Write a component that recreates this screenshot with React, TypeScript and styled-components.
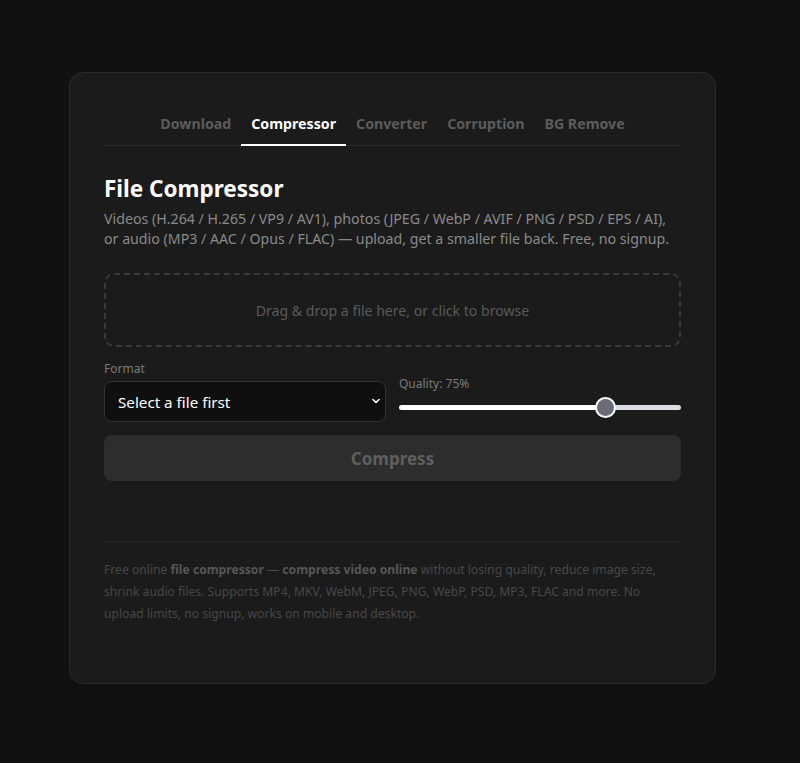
import { useState } from 'react';
import styled, { createGlobalStyle } from 'styled-components';

const GlobalStyle = createGlobalStyle`
  html, body {
    margin: 0;
    padding: 0;
    background: #111111;
    font-family: 'Noto Sans', 'Open Sans', sans-serif;
  }
  * { box-sizing: border-box; }
`;

const TABS = ['Download', 'Compressor', 'Converter', 'Corruption', 'BG Remove'];

const App = () => {
  const [active, setActive] = useState('Compressor');
  const [quality, setQuality] = useState(75);

  return (
    <Page>
      <GlobalStyle />
      <Card>
        <Tabs>
          {TABS.map((t) => (
            <Tab key={t} $active={t === active} onClick={() => setActive(t)}>
              {t}
            </Tab>
          ))}
        </Tabs>

        <Title>File Compressor</Title>
        <Description>
          Videos (H.264 / H.265 / VP9 / AV1), photos (JPEG / WebP / AVIF / PNG / PSD / EPS / AI),
          or audio (MP3 / AAC / Opus / FLAC) — upload, get a smaller file back. Free, no signup.
        </Description>

        <DropZone>Drag &amp; drop a file here, or click to browse</DropZone>

        <Controls>
          <Field>
            <Label>Format</Label>
            <SelectWrap>
              <Select disabled>
                <option>Select a file first</option>
              </Select>
              <Chevron viewBox="0 0 12 12">
                <path d="M3 4.5 L6 7.5 L9 4.5" />
              </Chevron>
            </SelectWrap>
          </Field>
          <Field $offset>
            <Label>Quality: {quality}%</Label>
            <Range
              type="range"
              min={0}
              max={100}
              value={quality}
              onChange={(e) => setQuality(Number(e.target.value))}
              style={{
                background: `linear-gradient(to right, #ffffff 0%, #ffffff ${quality}%, #dcdce4 ${quality}%, #dcdce4 100%)`,
              }}
            />
          </Field>
        </Controls>

        <CompressButton disabled>Compress</CompressButton>

        <Seo>
          Free online <strong>file compressor</strong> — <strong>compress video online</strong> without
          losing quality, reduce image size, shrink audio files. Supports MP4, MKV, WebM, JPEG, PNG,
          WebP, PSD, MP3, FLAC and more. No upload limits, no signup, works on mobile and desktop.
        </Seo>
      </Card>
    </Page>
  );
};

const Page = styled.main`
  min-height: 763px;
  padding: 72px 0 0 69px;
`;

const Card = styled.div`
  width: 647px;
  height: 612px;
  background: #1b1b1b;
  border: 1px solid #2a2a2a;
  border-radius: 14px;
  padding: 34px 34px;
  display: flex;
  flex-direction: column;
`;

const Tabs = styled.div`
  display: flex;
  justify-content: center;
  border-bottom: 1px solid #2c2c2c;
`;

const Tab = styled.button<{ $active?: boolean }>`
  background: none;
  border: none;
  border-bottom: 2px solid ${(p) => (p.$active ? '#ffffff' : 'transparent')};
  margin-bottom: -1px;
  padding: 7px 10px 10px;
  font-family: inherit;
  font-size: 14.2px;
  font-weight: 700;
  line-height: 20px;
  color: ${(p) => (p.$active ? '#ffffff' : '#5c5c5c')};
  cursor: pointer;
`;

const Title = styled.h1`
  margin: 28px 0 0;
  font-size: 22.5px;
  font-weight: 700;
  line-height: 30px;
  color: #ffffff;
`;

const Description = styled.p`
  margin: 5px 0 0;
  font-size: 14.2px;
  line-height: 20px;
  color: #8a8a8a;
`;

const DropZone = styled.div`
  margin-top: 24px;
  height: 74px;
  border: 2px dashed #3a3a3a;
  border-radius: 10px;
  display: flex;
  align-items: center;
  justify-content: center;
  font-size: 14.1px;
  color: #5a5a5a;
  cursor: pointer;
`;

const Controls = styled.div`
  margin-top: 14px;
  display: grid;
  grid-template-columns: 1fr 1fr;
  gap: 13px;
`;

const Field = styled.div<{ $offset?: boolean }>`
  display: flex;
  flex-direction: column;
  padding-top: ${(p) => (p.$offset ? '15px' : '0')};
`;

const Label = styled.label`
  font-size: 12px;
  line-height: 16px;
  color: #7a7a7a;
  margin-bottom: 4px;
`;

const SelectWrap = styled.div`
  position: relative;
`;

const Select = styled.select`
  width: 100%;
  height: 41px;
  appearance: none;
  background: #0f0f0f;
  border: 1px solid #333333;
  border-radius: 8px;
  padding: 0 13px;
  font-family: inherit;
  font-size: 15.2px;
  color: #ffffff;
  opacity: 1;
  &:disabled { color: #ffffff; }
`;

const Chevron = styled.svg`
  position: absolute;
  right: 4px;
  top: 14px;
  width: 12px;
  height: 12px;
  fill: none;
  stroke: #ffffff;
  stroke-width: 1.6;
  stroke-linecap: round;
  stroke-linejoin: round;
  pointer-events: none;
`;

const Range = styled.input`
  appearance: none;
  -webkit-appearance: none;
  width: 100%;
  height: 5px;
  margin: 9px 0 0;
  border-radius: 3px;
  outline: none;

  &::-webkit-slider-thumb {
    -webkit-appearance: none;
    width: 21px;
    height: 21px;
    border-radius: 50%;
    background: #6b6b78;
    border: 2px solid #ffffff;
    cursor: pointer;
  }
`;

const CompressButton = styled.button`
  margin-top: 13px;
  height: 46px;
  border: none;
  border-radius: 8px;
  background: #2d2d2d;
  color: #5f5f5f;
  font-family: inherit;
  font-size: 17px;
  font-weight: 700;
  cursor: not-allowed;
`;

const Seo = styled.p`
  margin: 60px 0 0;
  padding-top: 17px;
  border-top: 1px solid #242424;
  font-size: 12.15px;
  line-height: 22px;
  color: #484848;

  strong {
    color: #575757;
    font-weight: 700;
  }
`;

export default App;
